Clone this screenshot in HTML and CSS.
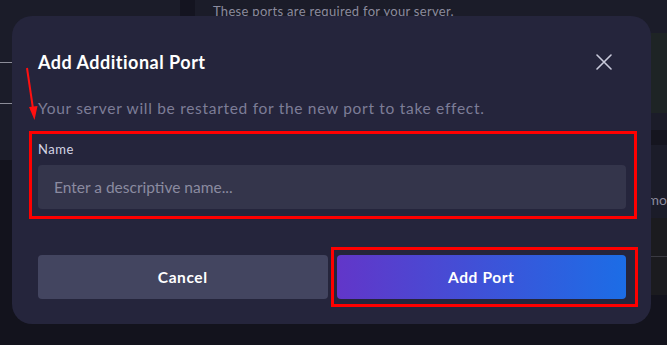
FILE: index.html
```html
<!DOCTYPE html>
<html>
<head>
<meta charset="utf-8">
<link rel="stylesheet" href="styles.css">
</head>
<body>
<div class="page">
  <aside class="sidebar">
    <div class="side-top">
      <div class="side-line l1"></div>
      <div class="side-line l2"></div>
    </div>
  </aside>
  <div class="divider"></div>
  <main class="main">
    <div class="main-head">
      <p class="main-desc">These ports are required for your server.</p>
    </div>
    <div class="green-block"></div>
    <div class="gap-light"></div>
    <div class="gap-dark"></div>
    <div class="row-block"><span class="row-text">mo</span></div>
    <div class="table-block"><div class="table-line"></div></div>
  </main>
</div>

<div class="modal">
  <div class="modal-head">
    <h2 class="modal-title">Add Additional Port</h2>
    <button class="close-btn" aria-label="Close">
      <svg width="16" height="16" viewBox="0 0 16 16"><path d="M1 1L15 15M15 1L1 15" stroke="#c9cadb" stroke-width="1.6" stroke-linecap="round"/></svg>
    </button>
  </div>
  <p class="modal-sub">Your server will be restarted for the new port to take effect.</p>
  <div class="field">
    <label class="field-label">Name</label>
    <input class="field-input" type="text" placeholder="Enter a descriptive name...">
  </div>
  <div class="actions">
    <button class="btn btn-cancel">Cancel</button>
    <button class="btn btn-add">Add Port</button>
  </div>
</div>

<div class="hl hl-field"></div>
<div class="hl hl-btn"></div>
<svg class="arrow" width="20" height="60" viewBox="0 0 20 60">
  <path d="M4 2L10.5 46" stroke="#ff1010" stroke-width="2"/>
  <path d="M6 41L11.5 54L14.5 40Z" fill="#ff1010"/>
</svg>
</body>
</html>
```

FILE: styles.css
```css
* { box-sizing: border-box; }
html, body { margin: 0; padding: 0; }
body {
  width: 667px;
  height: 345px;
  overflow: hidden;
  background: #13131d;
  font-family: Lato, "Noto Sans", sans-serif;
  position: relative;
}
.page {
  display: flex;
  height: 345px;
}
.sidebar {
  width: 180px;
  flex: none;
}
.side-top {
  height: 160px;
  background: #1b1c29;
  padding-top: 62px;
}
.side-line {
  height: 1px;
  background: #8c8c98;
  width: 100%;
}
.side-line.l2 { margin-top: 40px; }
.divider {
  width: 15px;
  flex: none;
  background: #141420;
  height: 160px;
}
.main {
  flex: 1;
  display: flex;
  flex-direction: column;
  overflow: hidden;
}
.main-head {
  height: 33px;
  background: #1b1c29;
  padding-left: 18px;
}
.main-desc {
  margin: 0;
  padding-top: 3px;
  font-size: 13px;
  letter-spacing: 0.3px;
  color: #8b8b9e;
}
.green-block { height: 80px; background: #1e2425; }
.gap-light { height: 17px; background: #1b1c29; }
.gap-dark { height: 15px; background: #15151f; }
.row-block {
  height: 73px;
  background: #1b1c29;
  text-align: right;
  padding-top: 44px;
  padding-right: 0;
}
.row-text { font-size: 14px; color: #8b8b9e; }
.table-block {
  height: 77px;
  background: #1b1b1f;
  padding-top: 38px;
}
.table-line { height: 1px; background: #3a3a42; }

.modal {
  position: absolute;
  left: 12px;
  top: 16px;
  width: 639px;
  height: 308px;
  background: #25253c;
  border-radius: 20px;
  padding: 36px 25px 0 26px;
  display: flex;
  flex-direction: column;
}
.modal-head {
  display: flex;
  align-items: center;
  justify-content: space-between;
  height: 20px;
}
.modal-title {
  margin: 0;
  font-size: 18px;
  font-weight: 700;
  letter-spacing: 0.5px;
  color: #ffffff;
}
.close-btn {
  background: none;
  border: none;
  padding: 0;
  margin-right: 14px;
  width: 16px;
  height: 16px;
  display: flex;
}
.modal-sub {
  margin: 26px 0 0 0;
  font-size: 15.5px;
  letter-spacing: 0.7px;
  color: #7d7d97;
  line-height: 20px;
}
.field {
  margin-top: 23px;
  display: flex;
  flex-direction: column;
}
.field-label {
  font-size: 13px;
  letter-spacing: 0.5px;
  color: #d4d4e4;
  line-height: 16px;
}
.field-input {
  margin-top: 8px;
  height: 44px;
  border: none;
  border-radius: 4px;
  background: #34354b;
  padding: 0 16px;
  font-family: inherit;
  font-size: 15.5px;
  color: #ffffff;
  outline: none;
}
.field-input::placeholder { color: #8b8ba0; }
.actions {
  margin-top: 46px;
  display: flex;
  gap: 9px;
}
.btn {
  flex: 1;
  height: 44px;
  border: none;
  border-radius: 4px;
  font-family: inherit;
  font-size: 15.5px;
  font-weight: 700;
  letter-spacing: 0.6px;
  color: #ffffff;
}
.btn-cancel { background: #434560; }
.btn-add { background: linear-gradient(90deg, #6236c9, #1c6de6); }

.hl {
  position: absolute;
  border: 3px solid #ff0000;
}
.hl-field { left: 29px; top: 131px; width: 608px; height: 88px; }
.hl-btn { left: 331px; top: 247px; width: 307px; height: 60px; }
.arrow { position: absolute; left: 23px; top: 66px; }
```
